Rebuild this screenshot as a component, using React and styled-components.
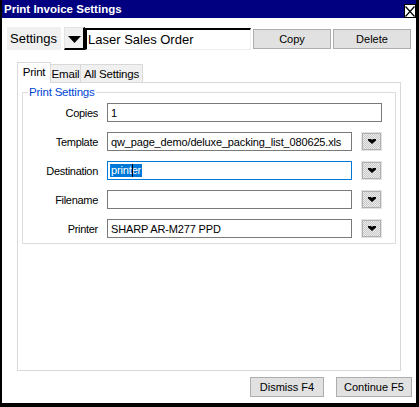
import React from "react";
import styled, { createGlobalStyle } from "styled-components";

const Global = createGlobalStyle`
  html, body { margin: 0; padding: 0; background: #fff; }
  body { font-family: "Liberation Sans", Arial, sans-serif; color: #000; }
  * { box-sizing: border-box; }
`;

const Window = styled.div`
  width: 419px;
  height: 407px;
  border-left: 2px solid #000;
  border-right: 3px solid #000;
  border-bottom: 4px solid #000;
  background: #fff;
  display: flex;
  flex-direction: column;
`;

const TitleBar = styled.div`
  height: 18px;
  flex: none;
  background: #000080;
  color: #fff;
  font-weight: bold;
  font-size: 11.5px;
  display: flex;
  align-items: center;
  justify-content: space-between;
  padding-left: 2px;
`;

const CloseBox = styled.div`
  width: 12px;
  height: 14px;
  align-self: flex-end;
  border: 1px solid #000;
  background: #fff;
  display: flex;
  align-items: center;
  justify-content: center;
`;

const SettingsRow = styled.div`
  display: flex;
  align-items: flex-end;
  padding: 9px 0 0 5px;
  height: 32px;
  flex: none;
`;

const SettingsLabel = styled.div`
  width: 54px;
  height: 23px;
  background: #f0f0f0;
  font-size: 13px;
  padding-left: 3px;
  display: flex;
  align-items: center;
  margin-right: 3px;
`;

const ComboButton = styled.div`
  width: 21px;
  height: 23px;
  background: #f0f0f0;
  border-top: 1px solid #e3e3e3;
  border-left: 1px solid #e3e3e3;
  border-right: 2px solid #000;
  border-bottom: 2px solid #000;
  display: flex;
  align-items: center;
  justify-content: center;
  padding-top: 3px;
`;

const NameField = styled.div`
  width: 166px;
  height: 22px;
  border-top: 2px solid #000;
  border-left: 2px solid #000;
  border-right: 1px solid #f0f0f0;
  border-bottom: 1px solid #f0f0f0;
  font-size: 13px;
  padding-left: 1px;
  display: flex;
  align-items: center;
  white-space: nowrap;
`;

const PushButton = styled.div`
  width: ${(p) => p.$w}px;
  height: 20px;
  margin-left: ${(p) => p.$ml || 0}px;
  margin-bottom: ${(p) => p.$mb || 0}px;
  background: #e1e1e1;
  border: 1px solid #adadad;
  font-size: 11px;
  display: flex;
  align-items: center;
  justify-content: center;
`;

const Tabs = styled.div`
  display: flex;
  align-items: flex-end;
  margin: 12px 0 0 15px;
  height: 20px;
  flex: none;
  position: relative;
  z-index: 1;
`;

const Tab = styled.div`
  width: ${(p) => p.$w}px;
  height: ${(p) => (p.$active ? 21 : 18)}px;
  margin-bottom: ${(p) => (p.$active ? -1 : 0)}px;
  margin-left: ${(p) => (p.$first ? 0 : -1)}px;
  background: ${(p) => (p.$active ? "#fff" : "#f0f0f0")};
  border: 1px solid #d9d9d9;
  border-bottom: none;
  font-size: 11.5px;
  letter-spacing: -0.2px;
  display: flex;
  align-items: center;
  justify-content: center;
  padding-bottom: ${(p) => (p.$active ? 3 : 0)}px;
  position: relative;
  z-index: ${(p) => (p.$active ? 2 : 1)};
`;

const Panel = styled.div`
  margin: 0 15px;
  height: 289px;
  flex: none;
  border: 1px solid #d9d9d9;
  background: #fff;
  padding: 0 4px;
`;

const Group = styled.fieldset`
  margin: 3px 0 0 0;
  border: 1px solid #dcdcdc;
  padding: 4px 13px 5px 0;
  min-width: 0;
  display: flex;
  flex-direction: column;
  gap: 10px;
`;

const Legend = styled.legend`
  color: #0046d5;
  font-size: 11.5px;
  letter-spacing: -0.2px;
  line-height: 13px;
  padding: 0 1px;
  margin-left: 5px;
`;

const Row = styled.div`
  display: grid;
  grid-template-columns: 75px 1fr 21px;
  column-gap: 9px;
  align-items: center;
`;

const Label = styled.div`
  font-size: 11px;
  letter-spacing: -0.3px;
  text-align: right;
  justify-self: end;
`;

const Field = styled.div`
  grid-column: ${(p) => (p.$wide ? "2 / span 2" : "2")};
  height: 19px;
  border: 1px solid ${(p) => (p.$focus ? "#0078d7" : "#7a7a7a")};
  background: #fff;
  font-size: 11px;
  letter-spacing: -0.15px;
  padding-left: 3px;
  display: flex;
  align-items: center;
  white-space: nowrap;
  overflow: hidden;
`;

const Selected = styled.span`
  background: #0078d7;
  color: #fff;
  line-height: 13px;
  margin-left: -1px;
  padding: 0 1px;
  display: inline-flex;
  align-items: center;
`;

const Caret = styled.span`
  display: inline-block;
  width: 1px;
  height: 13px;
  margin-right: -1px;
  background: #000;
  position: relative;
  z-index: 1;
`;

const DropButton = styled.div`
  width: 21px;
  height: 19px;
  border: 1px solid #e2e2e2;
  box-shadow: inset 0 0 0 1px #b0b0b0;
  background: repeating-conic-gradient(#c8c8c8 0 25%, #ececec 0 50%) 0 0 / 2px 2px;
  display: flex;
  align-items: center;
  justify-content: center;
`;

const ButtonRow = styled.div`
  display: flex;
  justify-content: flex-end;
  gap: 12px;
  padding: 6px 4px 0 0;
`;

const Chevron = () => (
  <svg width="8" height="5" viewBox="0 0 8 5">
    <path d="M0 0 H3 L4 1 L5 0 H8 V1.5 L4 5 L0 1.5 Z" fill="#000" />
  </svg>
);

const rows = [
  { label: "Copies", value: "1", wide: true },
  { label: "Template", value: "qw_page_demo/deluxe_packing_list_080625.xls" },
  { label: "Destination", focus: true },
  { label: "Filename", value: "" },
  { label: "Printer", value: "SHARP AR-M277 PPD" },
];

export default function App() {
  return (
    <>
      <Global />
      <Window>
        <TitleBar>
          <span>Print Invoice Settings</span>
          <CloseBox>
            <svg width="10" height="11" viewBox="0 0 10 11">
              <path d="M0.5 0.5 L9.5 10.5 M9.5 0.5 L0.5 10.5" stroke="#000" strokeWidth="1.2" />
            </svg>
          </CloseBox>
        </TitleBar>
        <SettingsRow>
          <SettingsLabel>Settings</SettingsLabel>
          <ComboButton>
            <svg width="13" height="7" viewBox="0 0 13 7">
              <polygon points="0,0 13,0 6.5,7" fill="#000" />
            </svg>
          </ComboButton>
          <NameField>Laser Sales Order</NameField>
          <PushButton $w={78} $ml={2} $mb={1}>Copy</PushButton>
          <PushButton $w={78} $ml={2} $mb={1}>Delete</PushButton>
        </SettingsRow>
        <Tabs>
          <Tab $w={34} $active $first>Print</Tab>
          <Tab $w={31}>Email</Tab>
          <Tab $w={63}>All Settings</Tab>
        </Tabs>
        <Panel>
          <Group>
            <Legend>Print Settings</Legend>
            {rows.map((r) => (
              <Row key={r.label}>
                <Label>{r.label}</Label>
                <Field $wide={r.wide} $focus={r.focus}>
                  {r.focus ? (
                    <Selected>
                      print
                      <Caret />
                      er
                    </Selected>
                  ) : (
                    r.value
                  )}
                </Field>
                {!r.wide && (
                  <DropButton>
                    <Chevron />
                  </DropButton>
                )}
              </Row>
            ))}
          </Group>
        </Panel>
        <ButtonRow>
          <PushButton $w={74}>Dismiss F4</PushButton>
          <PushButton $w={76}>Continue F5</PushButton>
        </ButtonRow>
      </Window>
    </>
  );
}
